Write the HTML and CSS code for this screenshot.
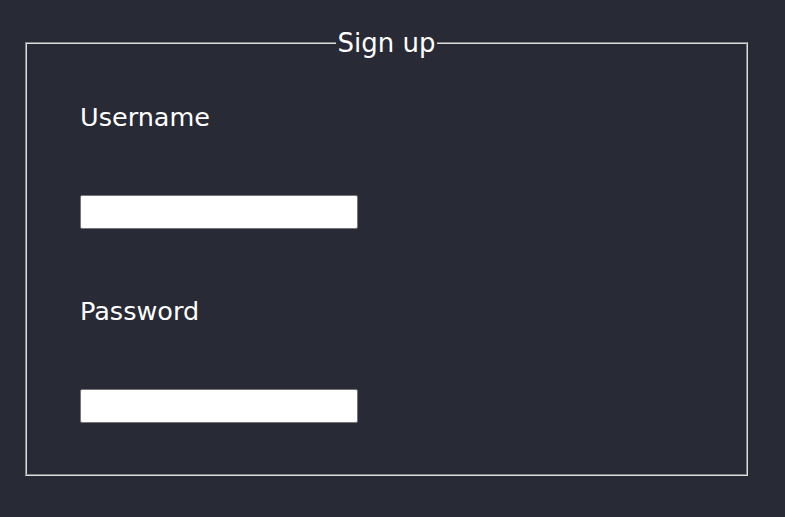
FILE: index.html
```html
<!DOCTYPE html>
<html lang="en">
<head>
<meta charset="utf-8">
<title>Sign up</title>
<link rel="stylesheet" href="styles.css">
</head>
<body>
<form class="signup">
  <fieldset class="box">
    <legend class="box-title">Sign up</legend>
    <div class="box-body">
      <label class="field-label" for="username">Username</label>
      <input class="field-input" id="username" type="text">
      <label class="field-label field-label-next" for="password">Password</label>
      <input class="field-input" id="password" type="password">
    </div>
  </fieldset>
</form>
</body>
</html>
```
FILE: styles.css
```css
html, body {
  margin: 0;
  padding: 0;
  background: #282a36;
}
body {
  font-family: "DejaVu Sans", Verdana, sans-serif;
  color: #ffffff;
}
.signup {
  display: block;
  padding: 28px 37px 0 25px;
}
.box {
  margin: 0;
  border: 2px groove rgb(220, 220, 220);
  padding: 45px 0 51px 0;
}
.box-title {
  margin: 0 auto;
  padding: 0 2px;
  font-size: 26px;
  line-height: 30px;
}
.box-body {
  display: flex;
  flex-direction: column;
  align-items: flex-start;
  padding-left: 53px;
}
.field-label {
  font-size: 25.5px;
  line-height: 29px;
  margin-bottom: 63px;
}
.field-label-next {
  margin-top: 68px;
}
.field-input {
  box-sizing: border-box;
  width: 278px;
  height: 34px;
  margin: 0;
  border: 1px solid #767676;
  border-radius: 2px;
  background: #ffffff;
  padding: 0 4px;
  font-size: 16px;
}
```
